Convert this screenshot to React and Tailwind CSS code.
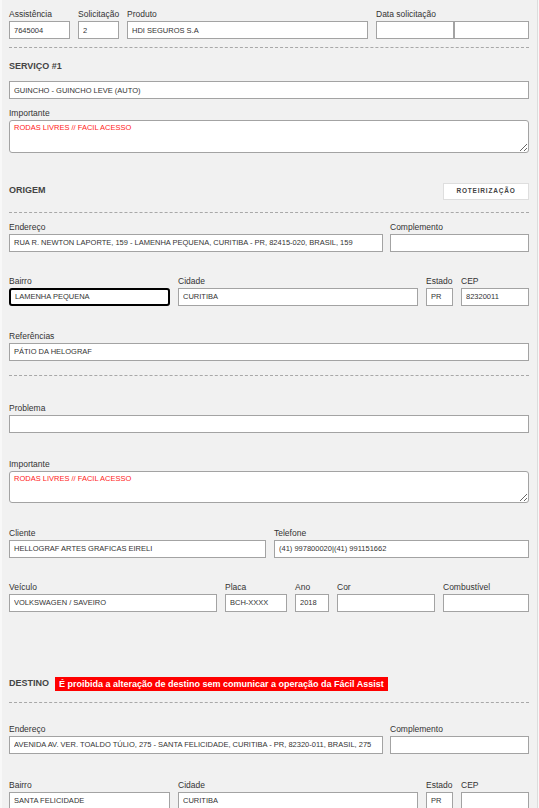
import React from "react";

const font = { fontFamily: '"Liberation Sans", Arial, sans-serif' };

// campo com rótulo + caixa de texto
const Field = ({ label, value = "", className = "", red = false, focused = false }) => (
  <div className={`flex min-w-0 flex-col ${className}`}>
    <label className="h-[12px] text-[8.5px] leading-[10px] text-[#333] whitespace-nowrap">
      {label}
    </label>
    <input
      readOnly
      value={value}
      className={`h-[18px] w-full min-w-0 bg-white px-[4px] text-[7.5px] outline-none ${
        red ? "text-[#ff1a1a]" : "text-[#333]"
      } ${
        focused
          ? "border-2 border-black rounded-[3px]"
          : "border border-[#a3a3a3]"
      }`}
    />
  </div>
);

const Area = ({ label, value, h = "h-[33px]" }) => (
  <div className="flex flex-col">
    <label className="h-[12px] text-[8.5px] leading-[10px] text-[#333]">{label}</label>
    <textarea
      readOnly
      value={value}
      className={`${h} w-full rounded-[3px] border border-[#a3a3a3] bg-white px-[4px] py-[2px] text-[7.5px] leading-[10px] text-[#ff1a1a] outline-none`}
    />
  </div>
);

const Dash = ({ className = "" }) => (
  <div className={`border-t border-dashed border-[#a8a8a8] ${className}`} />
);

const Heading = ({ children }) => (
  <span className="text-[9px] font-bold text-[#444]">{children}</span>
);

export default function App() {
  return (
    <div className="min-h-screen bg-[#f9f9f9]" style={font}>
      <div className="w-[538px] border-l-2 border-r border-l-[#f8f8f8] border-r-[#dcdcdc] bg-[#f1f1f1] pl-[7px] pr-[8px] pt-[9px] pb-[20px]">
        {/* cabeçalho */}
        <div className="flex gap-[8px]">
          <Field label="Assistência" value="7645004" className="w-[61px] shrink-0" />
          <Field label="Solicitação" value="2" className="w-[41px] shrink-0" />
          <Field label="Produto" value="HDI SEGUROS S.A" className="w-[241px] shrink-0" />
          <div className="flex min-w-0 flex-1 flex-col">
            <label className="h-[12px] text-[8.5px] leading-[10px] text-[#333]">Data solicitação</label>
            <div className="flex">
              <input readOnly className="h-[18px] w-[78px] min-w-0 shrink-0 border border-[#a3a3a3] bg-white" />
              <input readOnly className="h-[18px] w-0 min-w-0 flex-1 border border-[#a3a3a3] bg-white" />
            </div>
          </div>
        </div>

        <Dash className="mt-[8px]" />

        {/* serviço */}
        <div className="mt-[10px] h-[12px] leading-[12px]">
          <Heading>SERVIÇO #1</Heading>
        </div>
        <input
          readOnly
          value="GUINCHO - GUINCHO LEVE (AUTO)"
          className="mt-[11px] h-[18px] w-full border border-[#a3a3a3] bg-white px-[4px] text-[7.5px] text-[#333] outline-none"
        />
        <div className="mt-[8px]">
          <Area label="Importante" value="RODAS LIVRES // FACIL ACESSO" />
        </div>

        {/* origem */}
        <div className="mt-[30px] flex h-[17px] items-center justify-between">
          <Heading>ORIGEM</Heading>
          <button className="h-[17px] w-[86px] border border-[#dedede] bg-white text-[6.5px] font-bold tracking-[0.8px] text-[#444]">
            ROTEIRIZAÇÃO
          </button>
        </div>
        <Dash className="mt-[12px]" />

        <div className="mt-[9px] flex gap-[7px]">
          <Field
            label="Endereço"
            value="RUA R. NEWTON LAPORTE, 159 - LAMENHA PEQUENA, CURITIBA - PR, 82415-020, BRASIL, 159"
            className="w-[374px] shrink-0"
          />
          <Field label="Complemento" className="flex-1" />
        </div>

        <div className="mt-[24px] flex gap-[8px]">
          <Field label="Bairro" value="LAMENHA PEQUENA" className="w-[161px] shrink-0" focused />
          <Field label="Cidade" value="CURITIBA" className="w-[240px] shrink-0" />
          <Field label="Estado" value="PR" className="w-[27px] shrink-0" />
          <Field label="CEP" value="82320011" className="flex-1" />
        </div>

        <div className="mt-[25px]">
          <Field label="Referências" value="PÁTIO DA HELOGRAF" />
        </div>

        <Dash className="mt-[14px]" />

        <div className="mt-[27px]">
          <Field label="Problema" />
        </div>
        <div className="mt-[26px]">
          <Area label="Importante" value="RODAS LIVRES // FACIL ACESSO" h="h-[32px]" />
        </div>

        <div className="mt-[25px] flex gap-[8px]">
          <Field label="Cliente" value="HELLOGRAF ARTES GRAFICAS EIRELI" className="w-[257px] shrink-0" />
          <Field label="Telefone" value="(41) 997800020|(41) 991151662" className="flex-1" />
        </div>

        <div className="mt-[24px] flex gap-[8px]">
          <Field label="Veículo" value="VOLKSWAGEN / SAVEIRO" className="w-[208px] shrink-0" />
          <Field label="Placa" value="BCH-XXXX" className="w-[62px] shrink-0" />
          <Field label="Ano" value="2018" className="w-[34px] shrink-0" />
          <Field label="Cor" className="w-[98px] shrink-0" />
          <Field label="Combustível" className="flex-1" />
        </div>

        {/* destino */}
        <div className="mt-[65px] flex h-[14px] items-center gap-[6px]">
          <Heading>DESTINO</Heading>
          <span className="bg-[#ff0000] px-[4px] text-[9px] font-bold leading-[14px] text-white">
            É proibida a alteração de destino sem comunicar a operação da Fácil Assist
          </span>
        </div>
        <Dash className="mt-[11px]" />

        <div className="mt-[21px] flex gap-[7px]">
          <Field
            label="Endereço"
            value="AVENIDA AV. VER. TOALDO TÚLIO, 275 - SANTA FELICIDADE, CURITIBA - PR, 82320-011, BRASIL, 275"
            className="w-[374px] shrink-0"
          />
          <Field label="Complemento" className="flex-1" />
        </div>

        <div className="mt-[26px] flex gap-[8px]">
          <Field label="Bairro" value="SANTA FELICIDADE" className="w-[161px] shrink-0" />
          <Field label="Cidade" value="CURITIBA" className="w-[240px] shrink-0" />
          <Field label="Estado" value="PR" className="w-[27px] shrink-0" />
          <Field label="CEP" className="flex-1" />
        </div>
      </div>
    </div>
  );
}
